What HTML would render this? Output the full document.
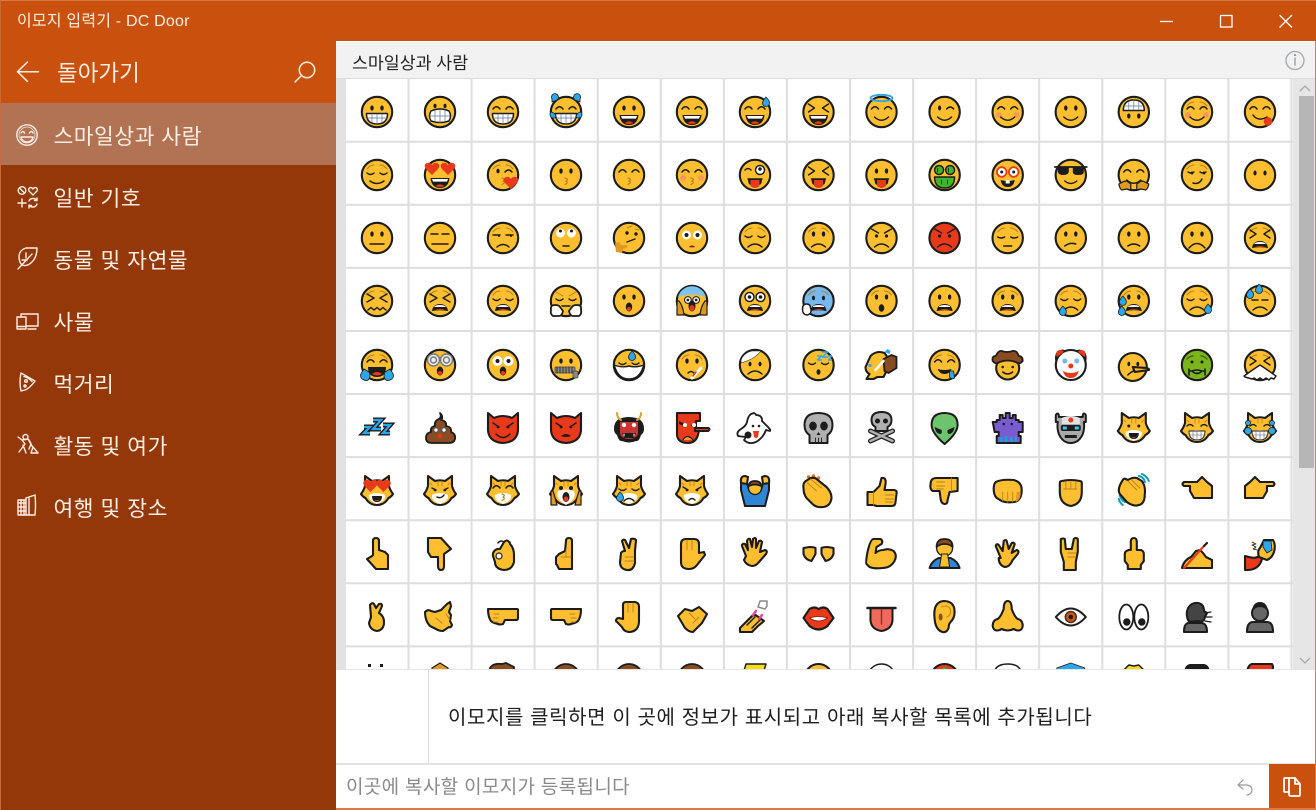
<!DOCTYPE html>
<html lang="ko"><head><meta charset="utf-8"><title>이모지 입력기 - DC Door</title>
<style>
html,body{margin:0;padding:0;width:1316px;height:810px;overflow:hidden;background:#c9510d;font-family:"Liberation Sans","Noto Sans CJK KR",sans-serif}
.a{position:absolute}
.t{position:absolute;white-space:nowrap;line-height:30px;height:30px}
.m{color:#fdeee4;font-size:21.5px;left:53.500px;letter-spacing:.5px}
#G{fill:none;stroke:#1c1c1c;stroke-width:1.450;stroke-linecap:round;stroke-linejoin:round}
.y{fill:#fdbf2f;stroke-width:2.100}
.K{fill:#1c1c1c;stroke:none}
.W{fill:#fff}
.R{fill:#e8391b;stroke:none}
.B{fill:#2ea6ea;stroke-width:.8}
.n{stroke:#b9801e;stroke-width:1}
.o{fill:#e09a1e;stroke-width:1.200}
.r{fill:#e8391b;stroke-width:2.100}
.q{fill:#666;stroke-width:2.100}
.b{fill:#8a4b20;stroke-width:1.800}
.h{stroke:#b9801e;stroke-width:.9}
.s{stroke:#fdeee4;stroke-width:1.400;fill:none;stroke-linecap:round;stroke-linejoin:round}
</style></head><body>
<div class="a" style="left:0;top:0;width:1316px;height:1px;background:#d8794a"></div>
<div class="a" style="left:0;top:103px;width:336px;height:707px;background:#94380a"></div>
<div class="a" style="left:0;top:103px;width:336px;height:62px;background:#b27355"></div>
<div class="a" style="left:0;top:0;width:1px;height:810px;background:#c66a3a"></div>
<div class="a" style="left:336px;top:41px;width:979px;height:767px;background:#fff"></div>
<div class="a" style="left:336px;top:42px;width:979px;height:36px;background:#f2f2f2;border-bottom:1px solid #dcdcdc"></div>
<div class="a" style="left:336px;top:79px;width:10px;height:590px;background:#e2e2e2"></div>
<div class="a" style="left:1293px;top:79px;width:22px;height:590px;background:#e6e6e6"></div>
<div class="a" style="left:1299px;top:96px;width:15px;height:372px;background:#b6b6b6"></div>

<div class="t" style="left:17px;top:7px;font-size:16px;letter-spacing:.2px;color:#fdeee4">이모지 입력기 - DC Door</div>
<div class="t" style="left:57px;top:59px;font-size:22.500px;color:#fdeee4">돌아가기</div>
<div class="t m" style="top:122px">스마일상과 사람</div>
<div class="t m" style="top:184px">일반 기호</div>
<div class="t m" style="top:246px">동물 및 자연물</div>
<div class="t m" style="top:308px">사물</div>
<div class="t m" style="top:370px">먹거리</div>
<div class="t m" style="top:432px">활동 및 여가</div>
<div class="t m" style="top:494px">여행 및 장소</div>
<div class="t" style="left:352px;top:48px;font-size:17.300px;color:#222">스마일상과 사람</div>

<svg class="a" style="left:0;top:0" width="1316" height="810" viewBox="0 0 1316 810">
<defs>
<circle id="f" r="15.200" class="y"/>
<g id="e"><ellipse cx="-5" cy="-4" rx="1.700" ry="2.600" class="K"/><ellipse cx="5" cy="-4" rx="1.700" ry="2.600" class="K"/></g>
<path id="a" d="M-10-3q3.500-4.500 7 0M3-3q3.500-4.500 7 0"/>
<path id="s" d="M-7 5q7 6.500 14 0"/>
<g id="g"><path class="W" d="M-10.500 1.500h21q0 10.500-10.500 10.500t-10.500-10.500z"/><path stroke="#5f7896" stroke-width=".7" d="M-5 2v8.500M0 2v10M5 2v8.500M-9.500 6h19"/></g>
<g id="o"><path class="K" d="M-9.500 3h19q-1 10-9.500 10t-9.500-10z"/><path class="W" stroke="none" d="M-8 4h16l-1 2.600h-14z"/><path class="R" d="M-4.500 11q4.500-3.500 9 0q-4.500 2-9 0z"/></g>
<g id="c" stroke="none"><circle cx="-9" cy="3" r="3" fill="#f59a5a" stroke="none"/><circle cx="9" cy="3" r="3" fill="#f59a5a" stroke="none"/></g>
<path id="k" stroke="#b9801e" stroke-width="1.200" d="M-1 3q4 1 1 3q3 1.500-1 3.500"/>
<path id="x" d="M-10-8l6 4-6 4M10-8l-6 4 6 4"/>
<path id="cl" d="M-10-2q3.500 3 7 0M3-2q3.500 3 7 0"/>
<path id="br" class="n" d="M-10-6q3-4 7-4M10-6q-3-4-7-4"/>
<path id="fr" d="M-7 9q7-6 14 0"/>
<g id="of"><path class="K" d="M-8 10q1-7 8-7t8 7q-8-1.500-16 0z"/><path class="W" stroke="none" d="M-5.500 5q5.500-2 11 0v1h-11z"/><path class="R" d="M-6 9.500q6-3 12 0q-6-1-12 0z"/></g>
<g id="hm"><ellipse cy="6" rx="3.200" ry="4.500" class="K"/><ellipse cy="8" rx="2" ry="2" class="R"/></g>
<g id="t"><path d="M-7 4h14"/><path class="K" d="M-7 4h14q0 6-3 6h-8q-3 0-3-6z"/><path class="R" d="M-4.500 5h9v6q-4.500 4-9 0z"/></g>
<path id="h" class="R" d="M0 6l-6-6q-3-4 1-6q3-1 5 2q2-3 5-2q4 2 1 6z"/>
<g id="w"><circle cx="-5.500" cy="-4" r="4.500" class="W"/><circle cx="5.500" cy="-4" r="4.500" class="W"/><circle cx="-5.500" cy="-4" r="1.800" class="K"/><circle cx="5.500" cy="-4" r="1.800" class="K"/></g>
<path id="d" class="B" d="M0-5q4 4 3.500 6a3.500 3.500 0 1 1-7 0q0-2 3.500-6z"/>
<path id="j" class="B" d="M-14-13a3.500 3.500 0 1 1 5 1l-5 2zM14-13a3.500 3.500 0 1 0-5 1l5 2zM-15 0a3.500 3.500 0 1 0 5 5q-1-5-5-5zM15 0a3.500 3.500 0 1 1-5 5q1-5 5-5z"/>
<g id="cat"><path class="y" d="M-12-15l7 5q5-1.500 10 0l7-5v10q1 4 4 8q-2 3-4.500 4q-4 7-11.500 7t-11.500-7q-2.500-1-4.500-4q3-4 4-8z"/><path stroke="#d87f1c" stroke-width="1" d="M-2-9v4M2-9v4M-10-8l2 2M10-8l-2 2"/></g>
<path id="mz" class="W" stroke="none" d="M-8 4q8-4 16 0q1 6-8 9q-9-3-8-9z"/>
<path id="fist" class="y" d="M-15-8h29q1 0 1 1v8q0 2-2 2h-11l-2 4q-3 1-5 0q-5-1-7-3q-3-4-3-12z"/>
<path id="pt" class="y" d="M-13-9h13l5-5 5 5 5 4v12h-18l-4-7v-5h-6q-3-2 0-4z"/>
<path id="oh" class="o" d="M-15 9q1 5 3 6l5-1 4 1v-6l-4-3q-3 0-4 1zM15 9q-1 5-3 6l-5-1-4 1v-6l4-3q3 0 4 1z"/>
</defs>

<g stroke="#dedede" stroke-width="2" fill="none">
<path d="M408.500 79V669M471.600 79V669M534.600 79V669M597.700 79V669M660.800 79V669M723.900 79V669M786.900 79V669M850 79V669M913.100 79V669M976.100 79V669M1039.200 79V669M1102.300 79V669M1165.300 79V669M1228.400 79V669M1291.500 79V669M346 141.700H1293M346 204.800H1293M346 267.900H1293M346 331H1293M346 394H1293M346 457.100H1293M346 520.200H1293M346 583.300H1293M346 646.400H1293"/>
</g>
<path d="M1300 91l5-5 5 5M1300 658l5 5 5-5" fill="none" stroke="#a8a8a8" stroke-width="1.300"/>

<g id="G">
<!-- row 10, mostly clipped -->
<g transform="translate(0 680)">
<g transform="translate(377)"><path class="K" d="M-9-16h3v3h-3zM3-16h3v3h-3z"/></g>
<g transform="translate(440)"><path class="o" d="M0-17l8 5v8h-16v-8z"/></g>
<g transform="translate(503)"><path class="b" d="M-13-12q3-5 12-4l4-1 8 4v8h-24z"/></g>
<g transform="translate(566)"><circle cy="-2" r="14" class="b"/></g>
<g transform="translate(629)"><circle cy="-2" r="14" class="b"/></g>
<g transform="translate(692)"><circle cy="-2" r="14" class="b"/></g>
<g transform="translate(755)"><path fill="#f8dc10" d="M-9-16h20l-3 10h-20z"/></g>
<g transform="translate(818.500)"><circle cy="-2" r="14" class="y"/></g>
<g transform="translate(881.500)"><circle cy="-2" r="14" class="W"/></g>
<g transform="translate(944.600)"><circle cy="-2" r="14" class="r"/><circle cy="-10" r="3" fill="#38a838" stroke="none"/></g>
<g transform="translate(1007.700)"><path class="W" d="M-14-4q0-12 14-12t14 12z"/></g>
<g transform="translate(1070.800)"><path class="B" stroke-width="1.800" d="M0-17l14 5v8h-28v-8z"/></g>
<g transform="translate(1133.800)"><path fill="#f8dc10" d="M-10-10l5-5 5 1 5-1 5 5v6h-20z"/></g>
<g transform="translate(1197)"><path class="K" d="M-13-6q0-9 6-10h14q6 1 6 10z"/></g>
<g transform="translate(1260)"><path class="r" d="M-13-8q1-7 5-8h20q2 3 0 8z"/></g>
</g>

<!-- row 1 -->
<g transform="translate(0 112)">
<g transform="translate(377)"><use href="#f"/><use href="#e"/><use href="#g"/></g>
<g transform="translate(440)"><use href="#f"/><ellipse cx="-5" cy="-6" rx="1.500" ry="2.200" class="K"/><ellipse cx="5" cy="-6" rx="1.500" ry="2.200" class="K"/><path class="W" d="M-9-1q9-4 18 0q3 5 0 10q-9 3-18 0q-3-5 0-10z"/><path stroke="#5f7896" stroke-width=".7" d="M-5-2v12M0-2v13M5-2v12M-10 4h20"/></g>
<g transform="translate(503)"><use href="#f"/><use href="#a"/><use href="#g"/></g>
<g transform="translate(566)"><use href="#f"/><use href="#a"/><use href="#g"/><use href="#j"/></g>
<g transform="translate(629)"><use href="#f"/><use href="#e"/><use href="#o"/></g>
<g transform="translate(692)"><use href="#f"/><use href="#a"/><use href="#o"/></g>
<g transform="translate(755)"><use href="#f"/><use href="#a"/><use href="#o"/><use href="#d" x="11" y="-10"/></g>
<g transform="translate(818.500)"><use href="#f"/><use href="#x"/><use href="#o"/></g>
<g transform="translate(881.500)"><use href="#f"/><ellipse cy="-14" rx="11" ry="3.200" stroke="#2ea6ea" stroke-width="1.800"/><use href="#a"/><use href="#s"/></g>
<g transform="translate(944.600)"><use href="#f"/><ellipse cx="-5" cy="-4" rx="1.600" ry="2.500" class="K"/><path d="M2-3q3.500-4 7 0"/><use href="#s"/></g>
<g transform="translate(1007.700)"><use href="#f"/><use href="#c"/><use href="#a"/><use href="#s"/></g>
<g transform="translate(1070.800)"><use href="#f"/><use href="#e"/><use href="#s"/></g>
<g transform="translate(1133.800)"><use href="#f"/><g transform="rotate(180)"><use href="#e"/><use href="#g"/></g></g>
<g transform="translate(1197)"><use href="#f"/><use href="#c"/><use href="#a"/><use href="#br"/><use href="#s"/></g>
<g transform="translate(1260)"><use href="#f"/><use href="#a"/><path d="M-7 3q5 7 14 2"/><circle cx="8" cy="9.500" r="4.300" class="R"/></g>
</g>

<!-- row 2 -->
<g transform="translate(0 175)">
<g transform="translate(377)"><use href="#f"/><use href="#br"/><use href="#cl"/><path d="M-7 6q7 5 14 0"/></g>
<g transform="translate(440)"><use href="#f"/><use href="#h" x="-8" y="-6"/><use href="#h" x="8" y="-6"/><use href="#o"/></g>
<g transform="translate(503)"><use href="#f"/><use href="#br"/><ellipse cx="-5" cy="-4" rx="1.600" ry="2.300" class="K"/><path d="M2-3q3.500-4 7 0"/><use href="#k"/><use href="#h" x="8" y="8"/></g>
<g transform="translate(566)"><use href="#f"/><use href="#e"/><use href="#k"/></g>
<g transform="translate(629)"><use href="#f"/><use href="#a"/><use href="#k"/></g>
<g transform="translate(692)"><use href="#f"/><use href="#c"/><use href="#a"/><use href="#k"/></g>
<g transform="translate(755)"><use href="#f"/><circle cx="5" cy="-5" r="4.500" class="W"/><circle cx="5" cy="-6" r="1.800" class="K"/><path d="M-10-5q3-3 6 0"/><use href="#t"/></g>
<g transform="translate(818.500)"><use href="#f"/><use href="#x"/><use href="#t"/></g>
<g transform="translate(881.500)"><use href="#f"/><use href="#e"/><use href="#t"/></g>
<g transform="translate(944.600)"><use href="#f"/><circle cx="-5.500" cy="-5" r="4.500" fill="#3fb52a"/><circle cx="5.500" cy="-5" r="4.500" fill="#3fb52a"/><path fill="#3fb52a" d="M-10 2h20q0 11-10 11t-10-11z"/><path stroke-width=".8" d="M-7-7v4M4-7v4M-3 5v4M3 5v4"/></g>
<g transform="translate(1007.700)"><use href="#f"/><circle cx="-6" cy="-3" r="4.800" class="W" stroke="#e8391b" stroke-width="1.800"/><circle cx="6" cy="-3" r="4.800" class="W" stroke="#e8391b" stroke-width="1.800"/><circle cx="-6" cy="-3" r="1.500" class="K"/><circle cx="6" cy="-3" r="1.500" class="K"/><path class="K" d="M-7 5q7 2 14 0q-1 7-7 7t-7-7z"/><rect x="-2" y="5" width="4" height="3.500" fill="#fff" stroke="none"/></g>
<g transform="translate(1070.800)"><use href="#f"/><path stroke-width="1.800" d="M-16-8H16"/><path class="K" d="M-13-8h11v5q-1 3-5.500 3t-5.500-3zM2-8h11v5q0 3-5.500 3t-5.500-3z"/><path d="M-6 6q6 5 12 0"/></g>
<g transform="translate(1133.800)"><use href="#f"/><use href="#a"/><use href="#s"/><use href="#oh"/></g>
<g transform="translate(1197)"><use href="#f"/><use href="#br"/><path d="M-9-3q3 2 6 0M3-3q3 2 6 0"/><ellipse cx="-5" cy="-2" rx="1.300" ry="1.500" class="K"/><ellipse cx="7" cy="-2" rx="1.300" ry="1.500" class="K"/><path d="M-4 8q6 2 9-4"/></g>
<g transform="translate(1260)"><use href="#f"/><ellipse cx="-5" cy="-2" rx="1.600" ry="2.500" class="K"/><ellipse cx="5" cy="-2" rx="1.600" ry="2.500" class="K"/></g>
</g>

<!-- row 3 -->
<g transform="translate(0 238)">
<g transform="translate(377)"><use href="#f"/><use href="#e"/><path d="M-7 6h14"/></g>
<g transform="translate(440)"><use href="#f"/><path d="M-9-4h7M2-4h7M-8 6h16"/></g>
<g transform="translate(503)"><use href="#f"/><use href="#br"/><path d="M-10-3h7M3-3h7"/><circle cx="-4" cy="-2" r="1" class="K"/><circle cx="8" cy="-2" r="1" class="K"/><path d="M-6 9q6-5 12 0"/></g>
<g transform="translate(566)"><use href="#f"/><circle cx="-5.500" cy="-5" r="4.500" class="W" stroke="none"/><circle cx="5.500" cy="-5" r="4.500" class="W" stroke="none"/><circle cx="-5.500" cy="-7" r="1.500" class="K"/><circle cx="5.500" cy="-7" r="1.500" class="K"/><path d="M-3 8h6"/></g>
<g transform="translate(629)"><use href="#f"/><path class="n" d="M-2-10l5-2M6-9l4 1"/><circle cx="-2" cy="-5" r="1.700" class="K"/><circle cx="7" cy="-4" r="1.700" class="K"/><path d="M-2 4l8-3"/><path class="o" stroke="none" d="M-13 14l-1-9 4-1 2 3 6 0 0 3-4 1-1 4z"/></g>
<g transform="translate(692)"><use href="#f"/><circle cx="-5.500" cy="-3" r="4.500" class="W" stroke="none"/><circle cx="5.500" cy="-3" r="4.500" class="W" stroke="none"/><circle cx="-5.500" cy="-3" r="2" class="K"/><circle cx="5.500" cy="-3" r="2" class="K"/><path class="K" d="M-3 9q3-3 6 0q-3 1-6 0z"/><path class="R" d="M-3 9.500q3-2 6 0z"/></g>
<g transform="translate(755)"><use href="#f"/><use href="#br"/><use href="#cl"/><use href="#fr"/></g>
<g transform="translate(818.500)"><use href="#f"/><use href="#br"/><use href="#e"/><use href="#fr"/></g>
<g transform="translate(881.500)"><use href="#f"/><path d="M-10-9l7 4M10-9l-7 4"/><circle cx="-5" cy="-2" r="1.600" class="K"/><circle cx="5" cy="-2" r="1.600" class="K"/><use href="#fr"/></g>
<g transform="translate(944.600)"><circle r="15.200" class="r"/><path d="M-10-9l7 4M10-9l-7 4"/><circle cx="-5" cy="-2" r="1.600" class="K"/><circle cx="5" cy="-2" r="1.600" class="K"/><use href="#fr"/></g>
<g transform="translate(1007.700)"><use href="#f"/><use href="#br"/><path d="M-10-1q3.500 2 7 0M3-1q3.500 2 7 0"/><path d="M-4 8h8"/></g>
<g transform="translate(1070.800)"><use href="#f"/><use href="#e"/><path d="M-6 8q5-4 11-2"/></g>
<g transform="translate(1133.800)"><use href="#f"/><use href="#e"/><path d="M-6 8q6-4 12 0"/></g>
<g transform="translate(1197)"><use href="#f"/><use href="#e"/><path d="M-8 10q8-9 16 0"/></g>
<g transform="translate(1260)"><use href="#f"/><use href="#br"/><use href="#x"/><use href="#of"/></g>
</g>

<!-- row 4 -->
<g transform="translate(0 301)">
<g transform="translate(377)"><use href="#f"/><use href="#br"/><path d="M-10-7l7 4-7 4M10-7l-7 4 7 4"/><path d="M-9 9l3-2.500 3 2.500 3-2.500 3 2.500 3-2.500 3 2.500"/></g>
<g transform="translate(440)"><use href="#f"/><use href="#br"/><path d="M-10-7l7 4-7 4M10-7l-7 4 7 4"/><use href="#of"/></g>
<g transform="translate(503)"><use href="#f"/><use href="#br"/><use href="#cl"/><use href="#of"/></g>
<g transform="translate(566)"><use href="#f"/><path class="n" d="M-10-9l7 4M10-9l-7 4"/><use href="#cl"/><path d="M-4 5h8"/><path class="W" stroke-width="1.800" d="M-15 9q-1-5 4-5q4 0 5 2l3 4q-1 5-4 5h-6q-3-2-2-6zM15 9q1-5-4-5q-4 0-5 2l-3 4q1 5 4 5h6q3-2 2-6z"/></g>
<g transform="translate(629)"><use href="#f"/><use href="#e"/><use href="#hm"/></g>
<g transform="translate(692)"><use href="#f"/><path fill="#7ec2f2" stroke="none" d="M-14-4a14.500 14.500 0 0 1 28 0q-14-5-28 0z"/><use href="#w" transform="translate(0 2) scale(.75)"/><ellipse cy="5" rx="3.500" ry="5.500" class="K"/><ellipse cy="7" rx="2.500" ry="3" class="R"/><path class="o" d="M-15 0v14h7q-1-9-5-14zM15 0v14h-7q1-9 5-14z"/></g>
<g transform="translate(755)"><use href="#f"/><use href="#w"/><use href="#of"/></g>
<g transform="translate(818.500)"><circle r="15.200" fill="#79b8ef" stroke-width="2.100"/><ellipse cx="-5" cy="-3" rx="1.500" ry="2.300" class="K"/><ellipse cx="5" cy="-3" rx="1.500" ry="2.300" class="K"/><use href="#br"/><use href="#of"/><path class="W" d="M-16 8q0-5 4-5t4 4q2 5-3 7q-5 0-5-6z"/></g>
<g transform="translate(881.500)"><use href="#f"/><use href="#br"/><use href="#e"/><ellipse cy="7" rx="2.800" ry="3.800" class="K"/></g>
<g transform="translate(944.600)"><use href="#f"/><use href="#e"/><use href="#of"/></g>
<g transform="translate(1007.700)"><use href="#f"/><use href="#br"/><use href="#e"/><use href="#of"/></g>
<g transform="translate(1070.800)"><use href="#f"/><use href="#br"/><use href="#cl"/><use href="#fr"/><use href="#d" x="-8" y="10"/></g>
<g transform="translate(1133.800)"><use href="#f"/><use href="#br"/><use href="#e"/><use href="#of"/><use href="#d" x="-11" y="0"/><use href="#d" x="-12" y="10"/></g>
<g transform="translate(1197)"><use href="#f"/><use href="#br"/><use href="#cl"/><use href="#fr"/><use href="#d" x="11" y="8"/></g>
<g transform="translate(1260)"><use href="#f"/><use href="#br"/><path d="M-8-1h6M2-1h6"/><use href="#fr"/><use href="#d" x="-10" y="-7"/><use href="#d" x="-1" y="-12"/></g>
</g>

<!-- row 5 -->
<g transform="translate(0 365)">
<g transform="translate(377)"><use href="#f"/><use href="#br"/><use href="#a"/><path class="K" d="M-9 2h18q0 10-9 10t-9-10z"/><path class="R" d="M-5 9q5-4 10 0q-5 3-10 0z"/><path class="B" d="M-15 14q-3-3 0-7l2-3 5 3q2 4 0 7t-7 0zM15 14q3-3 0-7l-2-3-5 3q-2 4 0 7t7 0z"/></g>
<g transform="translate(440)"><use href="#f"/><circle cx="-6.500" cy="-5" r="6" fill="#eee" stroke="#777"/><circle cx="6.500" cy="-5" r="6" fill="#eee" stroke="#777"/><circle cx="-6.500" cy="-5" r="3" stroke="#777"/><circle cx="6.500" cy="-5" r="3" stroke="#777"/><use href="#hm"/></g>
<g transform="translate(503)"><use href="#f"/><circle cx="-5.500" cy="-4" r="5" class="W" stroke="none"/><circle cx="5.500" cy="-4" r="5" class="W" stroke="none"/><circle cx="-5.500" cy="-4" r="2" class="K"/><circle cx="5.500" cy="-4" r="2" class="K"/><use href="#hm"/></g>
<g transform="translate(566)"><use href="#f"/><use href="#e"/><rect x="-11" y="2" width="20" height="6" rx="1" fill="#8a8a8a" stroke="#444" stroke-width=".8"/><path stroke-width=".8" d="M-9 2v6M-6 2v6M-3 2v6M0 2v6M3 2v6M6 2v6"/><rect x="7" y="6" width="5" height="7" rx="1.500" fill="#888" stroke="#444" stroke-width=".8"/></g>
<g transform="translate(629)"><use href="#f"/><use href="#cl"/><use href="#d" x="3" y="-9"/><path class="W" d="M-15 0q8 3 15 1q7 2 15-1l-2 5q-4 9-13 9t-13-9z"/></g>
<g transform="translate(692)"><use href="#f"/><use href="#br"/><use href="#e"/><path d="M-4 8q3-3 6 0"/><path stroke="#fff" stroke-width="3" d="M0 13l9-10"/><path stroke="#e8391b" stroke-width="1.500" d="M1 11l3-4"/></g>
<g transform="translate(755)"><use href="#f"/><path class="W" stroke-width=".6" d="M-14-5a15 15 0 0 1 11-9h9q-6 8-20 12z"/><ellipse cx="-5" cy="-1" rx="1.500" ry="2.300" class="K"/><ellipse cx="5" cy="-1" rx="1.500" ry="2.300" class="K"/><path d="M-7 9q7-6 14 0"/></g>
<g transform="translate(818.500)"><use href="#f"/><use href="#cl"/><ellipse cy="7" rx="2" ry="2.800" class="K"/><path stroke="#2ea6ea" stroke-width="1.400" d="M-1-9h4l-4 4h4M4-13h5l-5 5h5M10-9h3l-3 4h3"/></g>
<g transform="translate(881.500)"><path class="y" d="M-11-9q6-6 14-3l5 7q2 7-3 11l-3 6h-6l-4 2h-7l3-5q-4-2-4-7z"/><path class="b" stroke-width="1.200" d="M2-6l8-4 5 2v11l-8 5-4-2z"/><path class="B" stroke="none" d="M3-13l3-3 3 2-1 3zM-13-1h3v3h-3z"/><path stroke="#fff" stroke-width="2.500" d="M-6 5l8-9"/></g>
<g transform="translate(944.600)"><use href="#f"/><use href="#br"/><use href="#a"/><path class="K" d="M-7 4q7 2 14 0q-2 5-7 5t-7-5z"/><path class="B" stroke-width=".4" d="M5 6h4l1 7q-3 2-5-1z"/></g>
<g transform="translate(1007.700)"><circle cy="3" r="11.500" class="y"/><path class="b" d="M-15-4q-1-5 3-5q3-6 6-5q5 2 11 0q4-1 6 5q4 0 4 5q-3 4-7 1q-8-3-16 0q-4 3-7-1z"/><circle cx="-5" cy="2" r="1.300" class="K"/><circle cx="5" cy="2" r="1.300" class="K"/><path d="M-5 7q5 4 10 0"/></g>
<g transform="translate(1070.800)"><path class="r" d="M-13-13q6-3 8 1h10q2-4 8-1q3 5 1 10l-28 0q-2-5 1-10z"/><circle r="15" class="W" stroke-width="2.100"/><path class="R" d="M-14-8q-2-6 3-7q3 0 4 2zM14-8q2-6-3-7q-3 0-4 2z"/><circle cx="-6" cy="-4" r="2.500" fill="#79b8ef" stroke="none"/><circle cx="6" cy="-4" r="2.500" fill="#79b8ef" stroke="none"/><circle cy="1" r="2.500" class="R"/><path class="R" d="M-8 6q8 4 16 0q-2 7-8 7t-8-7z"/></g>
<g transform="translate(1133.800)"><circle cx="-1" cy="2" r="14" class="y"/><ellipse cx="-5" cy="-1" rx="1.400" ry="2.200" class="K"/><ellipse cx="4" cy="-1" rx="1.400" ry="2.200" class="K"/><path class="y" stroke-width="1.300" d="M-1 2l14 1q3 1 2 2l-14 2z"/><path d="M-6 10q3-3 6-4"/></g>
<g transform="translate(1197)"><circle r="15.200" fill="#7ab51d" stroke-width="2.100"/><path stroke="#3d6d0a" d="M-10-6q3-3 6-3M10-6q-3-3-6-3"/><circle cx="-5" cy="-3" r="1.500" class="K"/><circle cx="5" cy="-3" r="1.500" class="K"/><path stroke-width="1.600" d="M-8 6h3q5-2 10 0h3M-8 4v6M8 4v6M-4 7q4 3 8 0"/></g>
<g transform="translate(1260)"><use href="#f"/><use href="#br"/><use href="#x"/><path class="W" d="M-15 12l-1-1q3-2 7-5l9-6 9 6q4 3 7 5l-2 3-3-1-2 2-3-2-3 2-3-2-3 2-3-2-2 1z"/></g>
</g>

<!-- row 6 -->
<g transform="translate(0 428)">
<g transform="translate(377)"><g stroke-width="5" stroke-linecap="butt" stroke-linejoin="miter"><path d="M-13-1h6l-6 6h6"/><path d="M-4-8h8l-8 9h8"/><path d="M6-3h7l-7 8h7"/></g><g stroke-width="2.200" stroke="#2ea6ea" stroke-linecap="butt" stroke-linejoin="miter"><path d="M-13-1h6l-6 6h6"/><path d="M-4-8h8l-8 9h8"/><path d="M6-3h7l-7 8h7"/></g></g>
<g transform="translate(440)"><path class="b" d="M0-15q4 4 1 7q6 1 5 6q6 1 5 6q5 2 4 7q-1 4-6 4h-17q-6 0-6-5q0-5 5-6q-1-5 4-6q-1-5 4-7q3-2 1-6z"/><circle cx="-4" cy="2" r="2.400" class="W" stroke="#555"/><circle cx="4" cy="2" r="2.400" class="W" stroke="#555"/><circle cy="8" r="2" class="R"/></g>
<g transform="translate(503)"><path class="r" d="M-15-15l6 5q9-4 18 0l6-5v14q1 15-15 16q-16-1-15-16z"/><path d="M-10-5l6 4M10-5l-6 4M-7 6q7 7 14 0" stroke-width="1.500"/><circle cx="-5" cy="-1" r="1.400" class="K"/><circle cx="5" cy="-1" r="1.400" class="K"/></g>
<g transform="translate(566)"><path class="r" d="M-15-15l6 5q9-4 18 0l6-5v14q1 15-15 16q-16-1-15-16z"/><path d="M-10-5l6 4M10-5l-6 4" stroke-width="1.500"/><circle cx="-5" cy="-1" r="1.400" class="K"/><circle cx="5" cy="-1" r="1.400" class="K"/><path class="K" d="M-5 8q5-4 10 0q-5 2-10 0z"/></g>
<g transform="translate(629)"><path class="K" d="M-10-9q10-4 20 0q5 3 5 10q0 4-3 6q-2 7-5 6q-7 3-14 0q-3 1-5-6q-3-2-3-6q0-7 5-10z"/><path fill="#c33" stroke="none" d="M-9-6h18v12q-2 5-9 5t-9-5z"/><path stroke="#d9a22a" stroke-width="2" d="M-8-8q-4-2-4-7M8-8q4-2 4-7"/><circle cx="-5" cy="-3" r="2.200" class="W" stroke="none"/><circle cx="5" cy="-3" r="2.200" class="W" stroke="none"/><path class="K" d="M-7 5h14l-2 5h-10z"/><path stroke="#fff" stroke-width="1" d="M-5 6v2M5 6v2"/></g>
<g transform="translate(692)"><path class="r" d="M-15-15h23v8h-4v8h3q-1 14-11 14q-10 0-11-8z"/><path class="K" d="M-13-7l8 4-1 2-7-3zM5-7l-6 4 1 2 5-3z"/><circle cx="-7" cy="-3" r="2" class="W" stroke="none"/><circle cx="2" cy="-3" r="2" class="W" stroke="none"/><path class="r" stroke-width="1.400" d="M3 0h13q3 1 0 3h-13z"/><path d="M-9 12q4-7 10 0" fill="#f7a21a" stroke-width="1.200"/></g>
<g transform="translate(755)"><path class="W" stroke-width="1.800" d="M-1-15q2 1 2 2q5 0 6 4v2l6 6q3 3 2 4l-4-1q-3 8-10 12q-7 3-12-2q2-2 1-3l-7-1q-2-4 3-7q5-3 6-7q1-6 4-8z"/><circle cx="-7" cy="7" r="3.500" class="K"/><circle cx="-2" cy="-2" r="1.300" class="K"/><circle cx="4" cy="-2" r="1.300" class="K"/><path class="R" d="M-2 3h6l-1 6q-2 2-4 0z"/></g>
<g transform="translate(818.500)"><path fill="#b0b0b0" stroke-width="2" d="M-14-3q0-12 14-12t14 12q0 7-5 10v8h-18v-8q-5-3-5-10z"/><ellipse cx="-5.500" cy="-2" rx="3.800" ry="4.500" class="K"/><ellipse cx="5.500" cy="-2" rx="3.800" ry="4.500" class="K"/><path class="K" d="M0 4l2 3h-4z"/><path stroke-width=".9" d="M-3 10v5M0 10v5M3 10v5"/></g>
<g transform="translate(881.500)"><path fill="#b0b0b0" stroke-width="2" d="M-10-8q0-8 10-8t10 8q0 5-4 7v4h-12v-4q-4-2-4-7z"/><circle cx="-4" cy="-7" r="2.500" class="K"/><circle cx="4" cy="-7" r="2.500" class="K"/><path stroke-width="5" d="M-11 3l22 10M11 3l-22 10"/><path stroke="#b0b0b0" stroke-width="2.500" d="M-11 3l22 10M11 3l-22 10"/></g>
<g transform="translate(944.600)"><path fill="#6cc46c" stroke-width="2" d="M0-15q13 0 13 12q0 8-13 19q-13-11-13-19q0-12 13-12z"/><path class="K" d="M-10-1l7 3q1 4-2 4q-4-1-5-7zM10-1l-7 3q-1 4 2 4q4-1 5-7z"/></g>
<g transform="translate(1007.700)"><path fill="#7a5bd0" stroke-width="2" d="M-15-6h4v-2h3v-5h3v3h3v-5h4v5h3v-3h3v5h3v2h4v10h-4v4h2v7h-24v-7h2v-4h-4z"/><path fill="#1f9ed8" stroke="none" d="M-8 9h3v5h-3zM-3 8h3v6h-3zM2 9h3v5h-3zM7 9h2v5h-2z"/><circle cx="-4" cy="-4" r="1.300" class="K"/><circle cx="4" cy="-4" r="1.300" class="K"/></g>
<g transform="translate(1070.800)"><path fill="#aaa" stroke-width="2" d="M-15-6v-7q2-3 3 0v2h24v-2q1-3 3 0v7h-2q1 6-1 12q-4 9-12 9t-12-9q-2-6-1-12z"/><path fill="#e2e2e2" stroke="none" d="M-9-10q9-4 18 0v6h-18z"/><circle cy="-8" r="2.500" class="R"/><rect x="-10" y="-3" width="20" height="6" rx="2" class="K"/><rect x="-8" y="-1.500" width="4" height="3" fill="#38c8ee" stroke="none"/><rect x="4" y="-1.500" width="4" height="3" fill="#38c8ee" stroke="none"/><rect x="-6" y="7" width="12" height="3" class="K"/></g>
<g transform="translate(1133.800)"><use href="#cat"/><use href="#mz"/><circle cx="-5" cy="-2" r="1.500" class="K"/><circle cx="5" cy="-2" r="1.500" class="K"/><path class="K" d="M-5 5h10q0 6-5 6t-5-6z"/><path class="R" d="M-2 9h4q-2 2-4 0z"/></g>
<g transform="translate(1197)"><use href="#cat"/><use href="#mz"/><path d="M-10-2q3-3 6 0M4-2q3-3 6 0"/><path class="W" stroke-width=".9" d="M-8 3h16q0 9-8 9t-8-9z"/><path stroke="#666" stroke-width=".6" d="M-4 3v8M0 3v9M4 3v8M-8 7h16"/></g>
<g transform="translate(1260)"><use href="#cat"/><use href="#mz"/><path d="M-10-2q3-3 6 0M4-2q3-3 6 0"/><path class="W" stroke-width=".9" d="M-8 3h16q0 9-8 9t-8-9z"/><path stroke="#666" stroke-width=".6" d="M-4 3v8M0 3v9M4 3v8M-8 7h16"/><circle cx="-12" cy="3" r="3.500" class="B"/><circle cx="12" cy="3" r="3.500" class="B"/><circle cx="-12" cy="-5" r="2.500" class="B"/><circle cx="12" cy="-5" r="2.500" class="B"/></g>
</g>

<!-- row 7 -->
<g transform="translate(0 491)">
<g transform="translate(377)"><use href="#cat"/><use href="#mz"/><use href="#h" x="-6.500" y="-5"/><use href="#h" x="6.500" y="-5"/><path class="K" d="M-5 5h10q0 6-5 6t-5-6z"/><path class="R" d="M-2.500 9h5q-2.500 2-5 0z"/></g>
<g transform="translate(440)"><use href="#cat"/><use href="#mz"/><path d="M-8-3l4 2M8-3l-4 2"/><circle cx="-5" cy="-1" r="1.300" class="K"/><circle cx="5" cy="-1" r="1.300" class="K"/><path d="M-3 6q4 2 7-2"/></g>
<g transform="translate(503)"><use href="#cat"/><use href="#mz"/><use href="#a"/><use href="#k"/></g>
<g transform="translate(566)"><use href="#cat"/><path class="W" stroke="none" d="M-8 0q8-3 16 0q3 8-8 14q-11-6-8-14z"/><circle cx="-5" cy="-3" r="2" class="K"/><circle cx="5" cy="-3" r="2" class="K"/><ellipse cy="6" rx="3.500" ry="5" class="K"/><ellipse cy="8" rx="2.300" ry="2.500" class="R"/><path class="o" d="M-15 0v14h6q-2-8-4-14zM15 0v14h-6q2-8 4-14z"/></g>
<g transform="translate(629)"><use href="#cat"/><use href="#mz"/><use href="#cl"/><path d="M-5 10q5-5 10 0"/><use href="#d" x="-9" y="6"/></g>
<g transform="translate(692)"><use href="#cat"/><use href="#mz"/><path d="M-9-4l5 3M9-4l-5 3"/><circle cx="-5" cy="-1" r="1.300" class="K"/><circle cx="5" cy="-1" r="1.300" class="K"/><path d="M-3 9q3-3 6 0"/></g>
<g transform="translate(755)"><path fill="#2f86d6" stroke-width="2" d="M-14-8h6l2 7h12l2-7h6v7l-4 16h-20l-4-16z"/><path class="y" stroke-width="1.500" d="M-14-8q-1-7 4-7l3 1-1 7zM14-8q1-7-4-7l-3 1 1 7z"/><circle cy="-3" r="6.500" fill="#fdbf2f" stroke-width="1.300"/><path class="b" stroke-width="1" d="M-6-5q0-5 6-5t6 5q-6-3-12 0z"/></g>
<g transform="translate(818.500)"><circle cx="-10" cy="-14" r="1.700" fill="#e8701e" stroke="none"/><circle cx="-5" cy="-15" r="1.700" fill="#e8701e" stroke="none"/><circle cx="0" cy="-13" r="1.700" fill="#e8701e" stroke="none"/><path class="y" d="M-15-3q-1-6 4-8l3-2q4-1 6 1l10 8q5 5 5 11q-1 8-8 9q-7 1-11-3l-6-6q-3-4-3-10z"/><path class="h" d="M-11-8l9 8M-8-12l11 9"/></g>
<g transform="translate(881.500)"><path class="y" d="M-14 1h6l6-6 2-8q5-1 4 6l-1 6h9q4 0 3 4l-1 8q0 4-4 4h-15l-3-1h-6z"/><path class="h" d="M-8 1v13M4 4h8M4 8h8M4 11h7"/></g>
<g transform="translate(944.600)"><path class="y" d="M13-13h-21q-6 0-6 6q-1 5 2 7h7l1 8q1 5 4 5t3-4l2-8 8-1z"/><path class="h" d="M7-13v13M-8-9h8M-8-5h8M-8-2h7"/></g>
<g transform="translate(1007.700)"><path class="y" d="M-12-9q6-3 18-2q8 2 8 10q0 10-7 12q-8 1-13-1l-5-3q-3-3-3-9q0-5 2-7z"/><path class="h" d="M-5 1v9M0 1v11M5 1v10"/><path class="o" stroke="none" d="M9 1q4-1 4 1q0 7-5 9z"/></g>
<g transform="translate(1070.800)"><path class="y" d="M-11-8q0-2 2-2q9-2 18 0q2 0 2 2v9q0 12-11 14q-11-2-11-14z"/><path class="h" d="M-5-9v6M0-9v6M5-9v6M-7-2h13"/></g>
<g transform="translate(1133.800)"><path stroke="#149cb8" stroke-width="2" d="M5-15q5 1 6 6M8-17q5 2 7 7M-14 4q1 5 5 7M-15 8q1 4 4 6"/><path class="y" d="M-11-11q1-2 3-1l2 1q5-3 9-2l5 3q4 5 3 13q0 10-6 11q-5 2-12-3l-7-8q-3-5 3-14z"/><path class="h" d="M-6-10l9 9M-2-11l8 8"/></g>
<g transform="translate(1197)"><use href="#pt"/></g>
<g transform="translate(1260)"><use href="#pt" transform="scale(-1 1)"/></g>
</g>

<!-- row 8 -->
<g transform="translate(0 554)">
<g transform="translate(377)"><path class="y" d="M-1-16q3 0 3 3v9l6 2 3 3v14h-12l-9-10 5-3 1-1v-14q0-3 3-3z"/></g>
<g transform="translate(440)"><path class="y" d="M-12-16h13l10 11-7 5v12q0 4-3 4t-3-4v-9h-7l-3-5z"/></g>
<g transform="translate(503)"><path class="y" d="M-10 2a6 6 0 0 1 7-7l4-7q3-3 5 0q1 0 1 2q4 4 4 11v7q-2 8-10 8q-9-1-9-8z"/><circle cx="-4" cy="2" r="3" class="W" stroke-width="1.200"/><path d="M-5-11a4 4 0 0 1 6-1"/></g>
<g transform="translate(566)"><path class="y" d="M3-16q3 0 3 3v28h-13l-2-4-1-1v-7l3-3 6-3 1-10q0-3 3-3z"/><path class="h" d="M0-4v6M-5 3h10"/></g>
<g transform="translate(629)"><path class="y" d="M-4-14l4 8 2-9q3-1 5 1l-1 11v12q-2 8-8 7q-7-1-7-8l1-9q1-2 4-2l-3-10q1-2 3-1z"/><path class="h" d="M-4 3h9M-4 7h9"/></g>
<g transform="translate(692)"><path class="y" d="M-11-10q0-5 5-5h8q5 0 5 5v9l5-1 1 3-8 10q-3 4-8 4q-8 0-8-7z"/><path class="h" d="M-5-14v10M0-14v10"/></g>
<g transform="translate(755)"><path class="y" d="M-9 2l-4-10q0-3 3-2l3 6-1-9q1-3 3-2l2 8 1-8q2-2 3 0v9l3-7q2-1 3 1l-2 10 5-2q3 1 1 4l-7 8q-3 4-7 4q-6-1-8-6z"/></g>
<g transform="translate(818.500)"><path class="y" d="M-15-6l6-1q4 0 6 1v6l-4 7q-6-1-8-7zM15-6l-6-1q-4 0-6 1v6l4 7q6-1 8-7z"/></g>
<g transform="translate(881.500)"><path class="y" d="M-12 13l-3-3q-1-1 1-12q3-13 6-13h7q3 2 1 5l-5 3-1 6q3-3 8-3q5-2 10 1q4 4 1 10q-4 7-12 7q-8 1-13-1z"/></g>
<g transform="translate(944.600)"><path fill="#2f86d6" stroke-width="2" d="M-15 14q2-7 9-10h12q7 3 9 10z"/><circle cy="-6" r="8" fill="#fdbf2f" stroke-width="1.300"/><path class="b" stroke-width="1" d="M-8-7q0-8 8-8t8 8q-3-3-8-3t-8 3z"/><path fill="#fdbf2f" stroke-width="1" d="M-3 0h6l2 13h-10z"/></g>
<g transform="translate(1007.700)"><path class="y" d="M-7 4l-5-12q1-3 3-1l4 6 1-10q2-2 3 0l2 8 3-6q2-1 3 1l-3 9 5-3q3 1 1 4l-5 6q-3 7-8 7q-6-2-6-9z"/></g>
<g transform="translate(1070.800)"><path class="y" d="M-10-15q3-1 4 0l1 10h6l2-10q2-2 4 0v13l-2 10v8h-12v-8l-3-10z"/><path class="h" d="M-3-1h8M-3 3h8"/></g>
<g transform="translate(1133.800)"><path class="y" d="M0-16q3 0 3 4v8h4q3 1 3 4v7l-3 4v4h-13v-4l-3-4v-7q0-3 4-4h2v-8q0-4 3-4z"/></g>
<g transform="translate(1197)"><path class="y" d="M-15 14q2-8 9-11l5-6 4-1 3 3 3 4 6 3v8z"/><path stroke="#e8391b" stroke-width="2.200" d="M-13 14L7-8"/><path stroke-width="2.200" d="M7-8l3-3"/></g>
<g transform="translate(1260)"><path class="r" d="M-15 2l4 1q6 2 10-1l3 3q-3 11-15 11h-2z"/><path class="y" d="M-1 3q-2-6 1-9l4-8 9 0q3 5 1 12q-2 6-7 8z"/><path class="B" stroke-width=".6" d="M3-13h8l1 9-5 3-4-6z"/><path fill="#f8dc10" stroke-width=".8" d="M-8-12l4 2-4 1 4 2-3 2 4 1"/></g>
</g>

<!-- row 9 -->
<g transform="translate(0 617)">
<g transform="translate(377)"><path class="y" d="M-7-12q2-3 4-1l2 4 3-4q3-1 3 2l-3 7q5 3 5 9q0 8-7 9q-7-1-8-8l2-6z"/></g>
<g transform="translate(440)"><path class="y" d="M-15-5q3-3 6-1l4 1 6-2 6-6 3-2 1 4-2 6 2 3-1 6 2 4q-1 3-3 2l-6 4q-4 0-7-2l-6-3q-5-5-5-14z"/><path class="h" d="M-4 1l6 5M6-3l4 6"/></g>
<g transform="translate(503)"><use href="#fist"/><path class="h" d="M-9-3h5M-10 1h5M-9 5h4"/></g>
<g transform="translate(566)"><use href="#fist" transform="scale(-1 1)"/><path class="h" d="M9-3h-5M10 1h-5M9 5h-4"/></g>
<g transform="translate(629)"><path class="y" d="M-6-12q0-3 3-3h8q5 0 5 5v14q0 10-9 11q-6 0-8-5l-6-6q0-3 3-3l4 1z"/><path class="h" d="M-1-14v9M4-14v9"/></g>
<g transform="translate(692)"><path class="y" d="M-14-1l7-7 7 2 7-4 8 7-5 9-9 9q-4 0-8-4z"/><path class="h" d="M-3-4l6 6M1 6l6-6"/></g>
<g transform="translate(755)"><path class="y" d="M-15 15v-4l12-12q3-2 5 0l3 2 4 3-6 5-6 6z"/><path d="M-8 8l8-8M-3 11l8-8"/><path stroke="#e04a9a" stroke-width="2.500" d="M-2-2l3-4M4 2l3-4"/><path class="W" stroke="#888" d="M3-10l2-6h7v5l-2 3z"/></g>
<g transform="translate(818.500)"><path class="r" d="M-15 1l6-9q5-3 9 0q5-3 9 0l6 9-6 8q-9 7-18 0z"/><path fill="#fff" stroke="#7a1a10" stroke-width=".8" d="M-9 1q9-3 18 0q-9 6-18 0z"/></g>
<g transform="translate(881.500)"><path fill="#ee6a5a" stroke-width="2" d="M-11-9h22v9q1 12-11 14q-12-2-11-14z"/><path stroke-width="2.500" d="M-14-9H14"/><path stroke="#a03024" d="M0-7V7"/></g>
<g transform="translate(944.600)"><path class="y" d="M-1-16q11 0 11 11q0 6-4 10q-2 2-2 6q-2 5-6 4q-7-2-8-13q-2-17 9-18z"/><path class="h" d="M-3-10q8-3 9 4q0 5-4 6"/><ellipse cx="-4" cy="0" rx="2" ry="3.500" fill="#8a5016" stroke="none"/></g>
<g transform="translate(1007.700)"><path class="y" d="M-4-8q0-8 4-8t4 8q3 8 6 10q5 1 5 7q-1 6-7 4l-2-1q-6 3-12 0l-2 1q-6 2-7-4q0-6 5-7q3-2 6-10z"/></g>
<g transform="translate(1070.800)"><path class="W" stroke-width="2" d="M-15 0q15-17 30 0q-15 17-30 0z"/><circle r="5.500" fill="#c8551a" stroke="#5a2a10"/><circle r="2.300" class="K"/></g>
<g transform="translate(1133.800)"><ellipse cx="-7.500" rx="7" ry="12.500" class="W" stroke-width="1.800"/><ellipse cx="7.500" rx="7" ry="12.500" class="W" stroke-width="1.800"/><circle cx="-7" cy="5" r="3.700" class="K"/><circle cx="8" cy="5" r="3.700" class="K"/></g>
<g transform="translate(1197)"><path class="q" d="M-13 15q0-9 5-9h12q6 0 6 9z"/><path fill="#444" stroke-width="2" d="M-8 5q-4-7-1-14q4-6 10-5q6 1 6 8l3 2-2 4q-1 6-7 4z"/><path stroke-width="1.200" d="M8-4l6-1M8 0l7 0M8 4l6 1"/></g>
<g transform="translate(1260)"><path class="q" d="M-13 15q0-10 6-10h14q6 0 6 10z"/><circle cy="-4" r="8" fill="#666" stroke-width="2"/><path class="K" d="M-8-6q1-9 8-9t8 9q-4-4-8-4t-8 4z"/></g>
</g>
</g>

<!-- window controls -->
<g fill="none" stroke="#fff" stroke-width="1.300">
<path d="M1160 21.500h13"/><rect x="1220.500" y="15.500" width="11.500" height="11.500"/><path d="M1279.500 15l12.500 12.500M1292 15l-12.500 12.500"/>
</g>
<!-- back + search -->
<g class="s" style="stroke-width:1.500">
<path d="M27.500 62l-10 9.700 10 9.700M18 71.700h20.500"/>
<circle cx="307" cy="70" r="7.700"/><path d="M301.500 75.500l-6.500 6.500"/>
</g>
<!-- sidebar icons -->
<g class="s">
<circle cx="27" cy="135" r="10.200"/><circle cx="27" cy="135" r="8" stroke-width=".7"/><path d="M21 133q2-3 3.500 0M29.500 133q2-3 3.500 0"/><path d="M21 137h12q-1 5-6 5t-6-5z"/>
<circle cx="22" cy="190.500" r="3.800"/><path d="M19.500 188l5 5"/><path d="M33 195l-4-4q-1-3 1.500-3.500q1.500 0 2.500 1.500q1-1.500 2.500-1.500q2.500.5 1.500 3.500z"/><path d="M22 199v8M18 203h8"/><path d="M29 201q1-2.500 4-2.500t4 2M37 204q-1 3-4 3t-4-2M37 198v2.500h-2.500M29 208v-2.500h2.500"/>
<path d="M19 257q0-7 7-9h11q0 9-5 14q-5 5-10 3q-3-3-3-8z"/><path d="M18 269l14-15M22 260h5M26 258v-5"/>
<path d="M21 317v-3h17v12h-11"/><rect x="17" y="317" width="9" height="12"/><path d="M17 326.500h9M28 329h8"/>
<path d="M21 373l14 8q-5 7-10 9l-4 1q-2-9 0-18z"/><path d="M24 376.500q5 1.500 8 5"/><circle cx="26" cy="381" r="1.300"/><circle cx="25" cy="386" r="1"/>
<circle cx="25.500" cy="437" r="2.500"/><path d="M18 437l4 3 3 4-6 8M23 445l3 8M29 440l3 6 1 1M33 447l5 6h-7z"/><path d="M22 440l6-1 3 5-2 5"/>
<path d="M18 500h8v15h-8zM26 498l9-3q1 9 0 20h-9z"/><path d="M18 503h8M18 507h8M18 511h8M21 500v15M24 500v15M29 498v17"/>
</g>
</svg>

<div class="a" style="left:336px;top:669px;width:979px;height:94px;background:#fff;border-top:1px solid #e4e4e4;box-sizing:border-box"></div>
<div class="a" style="left:428px;top:669px;width:1px;height:94px;background:#dcdcdc"></div>
<div class="a" style="left:336px;top:763px;width:979px;height:2px;background:#e2e2e2"></div>
<div class="a" style="left:336px;top:765px;width:933px;height:43px;background:#fff"></div>
<div class="a" style="left:1269px;top:764px;width:46px;height:44px;background:#c9510d"></div>
<div class="a" style="left:336px;top:808px;width:980px;height:2px;background:#e07a45"></div>
<div class="a" style="left:1315px;top:41px;width:1px;height:769px;background:#e07a45"></div>
<div class="t" style="left:448px;top:703px;font-size:20px;color:#1e1e1e;letter-spacing:.6px">이모지를 클릭하면 이 곳에 정보가 표시되고 아래 복사할 목록에 추가됩니다</div>
<div class="t" style="left:346px;top:773px;font-size:19px;color:#8a8a8a;letter-spacing:.33px">이곳에 복사할 이모지가 등록됩니다</div>

<svg class="a" style="left:0;top:0;pointer-events:none" width="1316" height="810" viewBox="0 0 1316 810">
<g fill="none" stroke-linecap="round" stroke-linejoin="round">
<circle cx="1295" cy="60.500" r="9" stroke="#a3a9ad" stroke-width="1.300"/><path d="M1295 58v7" stroke="#8a9aa6" stroke-width="1.300"/><circle cx="1295" cy="55" r=".6" stroke="#8a9aa6"/>
<path d="M1243 780l-5 5 5 4M1238 785h9q5 1 5 5q0 4-5 5" stroke="#9a9a9a" stroke-width="1.200"/>
<path d="M1290 778h-5q-1 0-1 1v12q0 1 1 1h4M1290 778h5l5 6v11q0 1-1 1h-8q-2 0-2-2v-15q0-1 1-1zM1295 778v6h5" stroke="#fff" stroke-width="1.800"/>
</g>
</svg>
</body></html>
